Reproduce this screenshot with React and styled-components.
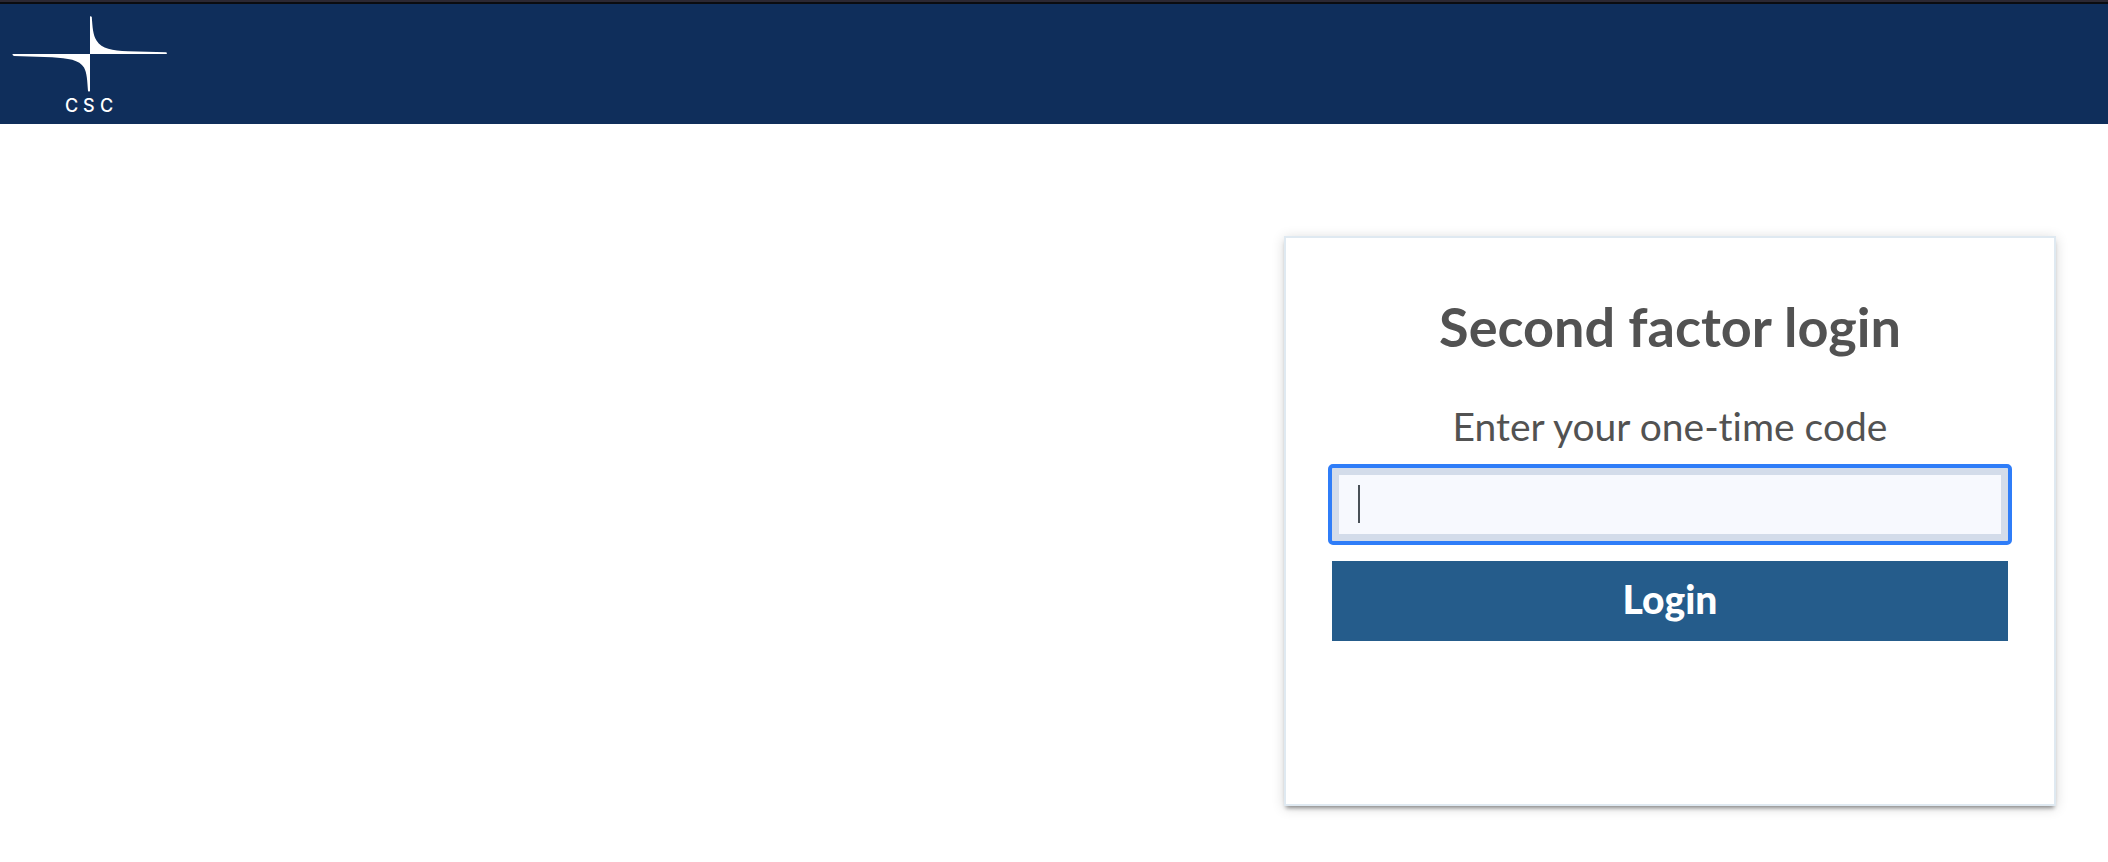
import React from "react";
import styled, { createGlobalStyle } from "styled-components";

const GlobalStyle = createGlobalStyle`
  *, *::before, *::after { box-sizing: border-box; }
  body {
    margin: 0;
    background: #fff;
    color: #525252;
    font-family: Lato, "Open Sans", sans-serif;
    font-variant-ligatures: none;
  }
`;

const TopEdge = styled.div`
  height: 4px;
  background: #2b2833;
  border-bottom: 2px solid #0b0c10;
`;

const Header = styled.header`
  display: flex;
  height: 120px;
  padding: 10px 12px 0;
  background: #0f2e5b;
`;

const HomeLink = styled.a`
  display: block;
  height: 106px;
`;

const LogoText = styled.text`
  font-family: Inter, sans-serif;
  font-size: 18px;
  font-weight: 500;
  fill: #fff;
`;

const Main = styled.main`
  display: flex;
  justify-content: flex-end;
  padding: 112px 52px 48px;
`;

const Card = styled.section`
  width: 100%;
  max-width: 772px;
  min-height: 570px;
  padding: 56px 46px;
  border: 2px solid #dfe9f1;
  background: #fff;
  box-shadow: 0 4px 4px -2px rgba(0, 0, 0, 0.4), 0 2px 12px rgba(0, 0, 0, 0.16);
`;

const Title = styled.h1`
  margin: 0;
  font-size: 54px;
  line-height: 66px;
  font-weight: 700;
  text-align: center;
`;

const Form = styled.form`
  display: flex;
  flex-direction: column;
  margin-top: 42px;
`;

const Label = styled.label`
  font-size: 39px;
  line-height: 48px;
  text-align: center;
`;

const Field = styled.div`
  position: relative;
  margin-top: 18px;
`;

const CodeInput = styled.input`
  display: block;
  width: 100%;
  height: 73px;
  padding: 0 19px;
  border: 7px solid #d3dcea;
  border-radius: 1px;
  background: #f7f9fe;
  color: #495057;
  font: inherit;
  font-size: 32px;
  caret-color: transparent;
  outline: 4px solid #2f7df8;
`;

const Caret = styled.span`
  position: absolute;
  left: 26px;
  top: 17px;
  width: 2px;
  height: 38px;
  background: #495057;
`;

const LoginButton = styled.button`
  height: 80px;
  margin-top: 20px;
  padding: 0 0 4px;
  border: 0;
  background: #255c8b;
  color: #fff;
  font-family: inherit;
  font-size: 39px;
  font-weight: 900;
`;

function Logo() {
  return (
    <svg width="156" height="106" viewBox="12 14 156 106" role="img" aria-label="CSC">
      <g fill="#fff">
        <path d="M90 16.5 Q91 15.8 91.8 17 C92.5 27 93 35 96.5 40.5 C102 49 112 50.6 128 51.2 L166 52.2 Q168 53 166.5 54 L90 54 Z" />
        <path d="M90 54.5 L90 91 Q89 92 88 91 C87.3 81 87 73 84 67.5 C79.5 59.7 68 58.2 52 57.2 L14 55.9 Q11.5 55 13 54 L90 54 Z" />
      </g>
      <LogoText y="112" x="65 83 100">CSC</LogoText>
    </svg>
  );
}

export default function App() {
  return (
    <>
      <GlobalStyle />
      <TopEdge />
      <Header>
        <HomeLink href="#"><Logo /></HomeLink>
      </Header>
      <Main>
        <Card>
          <Title>Second factor login</Title>
          <Form onSubmit={(event) => event.preventDefault()}>
            <Label htmlFor="code">Enter your one-time code</Label>
            <Field>
              <CodeInput id="code" name="code" type="text" autoComplete="one-time-code" autoFocus />
              <Caret aria-hidden="true" />
            </Field>
            <LoginButton type="submit">Login</LoginButton>
          </Form>
        </Card>
      </Main>
    </>
  );
}
